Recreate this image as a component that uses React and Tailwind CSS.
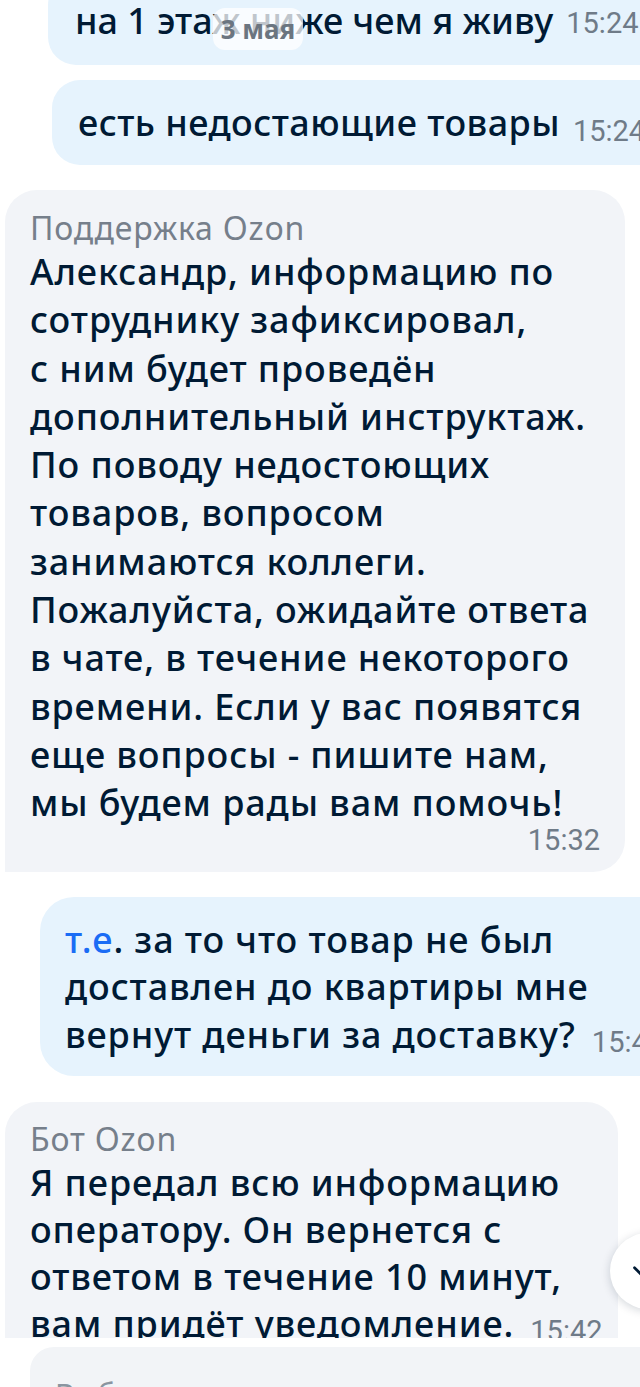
import { ChevronDown } from "lucide-react";

const supportLines = [
  "Александр, информацию по",
  "сотруднику зафиксировал,",
  "с ним будет проведён",
  "дополнительный инструктаж.",
  "По поводу недостоющих",
  "товаров, вопросом",
  "занимаются коллеги.",
  "Пожалуйста, ожидайте ответа",
  "в чате, в течение некоторого",
  "времени. Если у вас появятся",
  "еще вопросы - пишите нам,",
  "мы будем рады вам помочь!",
];

const botLines = [
  "Я передал всю информацию",
  "оператору. Он вернется с",
  "ответом в течение 10 минут,",
];

const Time = ({ children, className = "" }) => (
  <span className={`font-['Roboto',sans-serif] text-[29px] leading-[28px] text-[#6f7b88] whitespace-nowrap ${className}`}>
    {children}
  </span>
);

const App = () => {
  return (
    <div className="relative w-[640px] h-[1387px] overflow-hidden bg-white flex flex-col font-['Noto_Sans',sans-serif] text-[#001a34]">
      {/* Messages */}
      <div className="flex-1 overflow-hidden">
        <div className="flex flex-col -mt-[23px]">
          {/* User 1 */}
          <div className="relative ml-[48px] -mr-[80px] rounded-[28px] bg-[#e6f3fd] pl-[27px] pt-[20px] pb-[20px] flex items-end gap-[13px]">
            <span className="text-[36px] tracking-[0px] leading-[48px] font-medium whitespace-nowrap">
              на 1 этаж ниже чем я живу
            </span>
            <Time className="mb-[8px]">15:24</Time>
            {/* date pill */}
            <div className="absolute left-[165px] top-[31px] h-[42px] w-[90px] rounded-[12px] bg-white/75 flex items-center justify-center">
              <span className="text-[26px] leading-[30px] font-bold text-[#6b7580]">3 мая</span>
            </div>
          </div>

          {/* User 2 */}
          <div className="mt-[15px] ml-[52px] -mr-[80px] h-[85px] rounded-[28px] bg-[#e6f3fd] pl-[26px] flex items-center gap-[13px]">
            <span className="text-[36px] tracking-[0.45px] leading-[48px] font-medium whitespace-nowrap">
              есть недостающие товары
            </span>
            <Time className="mt-[16px]">15:24</Time>
          </div>

          {/* Support */}
          <div className="mt-[25px] ml-[5px] w-[620px] rounded-[32px] rounded-bl-none bg-[#f2f4f8] pl-[25px] pr-[25px] pt-[20px] pb-[18px] flex flex-col">
            <div className="text-[32px] tracking-[0.8px] leading-[36px] text-[#767f8b]">Поддержка Ozon</div>
            <div className="flex flex-col mt-[2px]">
              {supportLines.map((l) => (
                <div key={l} className="text-[36px] tracking-[0.9px] leading-[48.3px] font-medium whitespace-nowrap">
                  {l}
                </div>
              ))}
            </div>
            <div className="flex justify-end -mt-[2px]">
              <Time>15:32</Time>
            </div>
          </div>

          {/* User 3 */}
          <div className="mt-[25px] ml-[40px] -mr-[80px] rounded-[34px] bg-[#e6f3fd] pl-[25px] pt-[19px] pb-[18px] flex flex-col">
            <div className="text-[36px] tracking-[0.9px] leading-[47.5px] font-medium whitespace-nowrap">
              <span className="text-[#1a6cf5]">т.е</span>. за то что товар не был
            </div>
            <div className="text-[36px] tracking-[0.9px] leading-[47.5px] font-medium whitespace-nowrap">
              доставлен до квартиры мне
            </div>
            <div className="flex items-end gap-[16px]">
              <span className="text-[36px] tracking-[0.9px] leading-[47.5px] font-medium whitespace-nowrap">
                вернут деньги за доставку?
              </span>
              <Time className="mb-[2px]">15:42</Time>
            </div>
          </div>

          {/* Bot */}
          <div className="mt-[26px] ml-[5px] w-[613px] rounded-[32px] bg-[#f2f4f8] pl-[25px] pr-[25px] pt-[19px] pb-[22px] flex flex-col">
            <div className="text-[32px] tracking-[0.8px] leading-[36px] text-[#767f8b]">Бот Ozon</div>
            <div className="flex flex-col mt-[2px]">
              {botLines.map((l) => (
                <div key={l} className="text-[36px] tracking-[0.9px] leading-[47px] font-medium whitespace-nowrap">
                  {l}
                </div>
              ))}
              <div className="flex items-end gap-[16px]">
                <span className="text-[36px] tracking-[0.9px] leading-[47px] font-medium whitespace-nowrap">
                  вам придёт уведомление.
                </span>
                <Time className="mb-[2px]">15:42</Time>
              </div>
            </div>
          </div>
        </div>
      </div>

      {/* Bottom input */}
      <div className="h-[49px] shrink-0 bg-white pt-[9px] pl-[30px]">
        <div className="h-full rounded-tl-[24px] bg-[#f2f4f7] pl-[25px] pt-[30px] overflow-hidden">
          <span className="text-[30px] leading-[36px] text-[#8a95a0]">Выберите тему</span>
        </div>
      </div>

      {/* Scroll down button */}
      <div className="absolute left-[610px] top-[1233px] w-[76px] h-[76px] rounded-full bg-white shadow-[0_2px_10px_rgba(0,26,52,0.18)] flex items-center pl-[18px]">
        <ChevronDown className="w-[26px] h-[26px] text-[#001a34]" strokeWidth={2.5} />
      </div>
    </div>
  );
};

export default App;
